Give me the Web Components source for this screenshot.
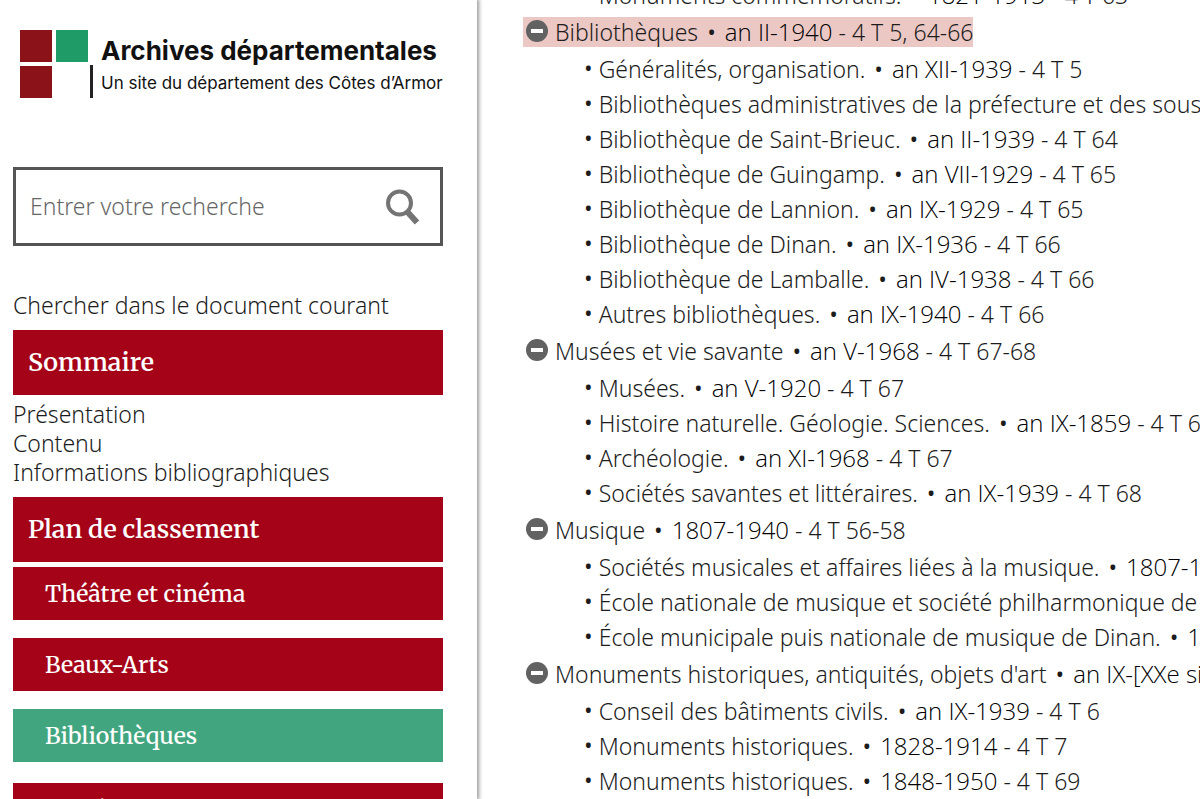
<!DOCTYPE html>
<html lang="fr">
<head>
<meta charset="utf-8">
<meta name="viewport" content="width=device-width, initial-scale=1">
<title>Archives départementales – Côtes d’Armor</title>
<style>
  html, body { height: 100%; margin: 0; }
  body {
    overflow: hidden;
    background: #fff;
    color: #1c1c1c;
    font: 300 23px/29px "Noto Sans", "Open Sans", sans-serif;
  }
</style>
</head>
<body>

<archive-page>
  <archive-sidebar slot="side">
    <site-logo href="#accueil">
      <span slot="title">Archives départementales</span>
      <span slot="subtitle">Un site du département des Côtes d’Armor</span>
    </site-logo>
    <search-box placeholder="Entrer votre recherche"></search-box>
    <side-links>
      <side-link href="#chercher">Chercher dans le document courant</side-link>
    </side-links>
    <side-heading>Sommaire</side-heading>
    <side-links>
      <side-link href="#presentation">Présentation</side-link>
      <side-link href="#contenu">Contenu</side-link>
      <side-link href="#informations">Informations bibliographiques</side-link>
    </side-links>
    <side-heading>Plan de classement</side-heading>
    <plan-list>
      <plan-item href="#theatre">Théâtre et cinéma</plan-item>
      <plan-item href="#beaux-arts">Beaux-Arts</plan-item>
      <plan-item href="#bibliotheques" current>Bibliothèques</plan-item>
      <plan-item href="#musees">Musées et vie savante</plan-item>
    </plan-list>
  </archive-sidebar>

  <tree-view>
    <tree-leaf date="1821-1913" cote="4 T 63">Monuments commémoratifs.</tree-leaf>

    <tree-branch date="an II-1940" cote="4 T 5, 64-66" current>Bibliothèques</tree-branch>
    <tree-leaf date="an XII-1939" cote="4 T 5">Généralités, organisation.</tree-leaf>
    <tree-leaf date="an VIII-1940" cote="4 T 64">Bibliothèques administratives de la préfecture et des sous-préfectures.</tree-leaf>
    <tree-leaf date="an II-1939" cote="4 T 64">Bibliothèque de Saint-Brieuc.</tree-leaf>
    <tree-leaf date="an VII-1929" cote="4 T 65">Bibliothèque de Guingamp.</tree-leaf>
    <tree-leaf date="an IX-1929" cote="4 T 65">Bibliothèque de Lannion.</tree-leaf>
    <tree-leaf date="an IX-1936" cote="4 T 66">Bibliothèque de Dinan.</tree-leaf>
    <tree-leaf date="an IV-1938" cote="4 T 66">Bibliothèque de Lamballe.</tree-leaf>
    <tree-leaf date="an IX-1940" cote="4 T 66">Autres bibliothèques.</tree-leaf>

    <tree-branch date="an V-1968" cote="4 T 67-68">Musées et vie savante</tree-branch>
    <tree-leaf date="an V-1920" cote="4 T 67">Musées.</tree-leaf>
    <tree-leaf date="an IX-1859" cote="4 T 67">Histoire naturelle. Géologie. Sciences.</tree-leaf>
    <tree-leaf date="an XI-1968" cote="4 T 67">Archéologie.</tree-leaf>
    <tree-leaf date="an IX-1939" cote="4 T 68">Sociétés savantes et littéraires.</tree-leaf>

    <tree-branch date="1807-1940" cote="4 T 56-58">Musique</tree-branch>
    <tree-leaf date="1807-1940" cote="4 T 56">Sociétés musicales et affaires liées à la musique.</tree-leaf>
    <tree-leaf date="1884-1940" cote="4 T 57">École nationale de musique et société philharmonique de Saint-Brieuc.</tree-leaf>
    <tree-leaf date="1900-1940" cote="4 T 58">École municipale puis nationale de musique de Dinan.</tree-leaf>

    <tree-branch date="an IX-[XXe siècle]" cote="4 T 6-55">Monuments historiques, antiquités, objets d'art</tree-branch>
    <tree-leaf date="an IX-1939" cote="4 T 6">Conseil des bâtiments civils.</tree-leaf>
    <tree-leaf date="1828-1914" cote="4 T 7">Monuments historiques.</tree-leaf>
    <tree-leaf date="1848-1950" cote="4 T 69">Monuments historiques.</tree-leaf>
  </tree-view>
</archive-page>

<script>
  class BaseElement extends HTMLElement {
    connectedCallback() {
      if (!this.shadowRoot) {
        this.attachShadow({ mode: 'open' }).innerHTML = this.render();
      }
    }
    attr(name) {
      return (this.getAttribute(name) || '').replace(/&/g, '&amp;').replace(/"/g, '&quot;').replace(/</g, '&lt;');
    }
  }

  customElements.define('archive-page', class extends BaseElement {
    render() {
      return `
        <style>
          :host { display: grid; grid-template-columns: 40% 1fr; height: 100%; }
          aside, main { min-width: 0; overflow: hidden; }
          aside { box-sizing: border-box; margin-right: 3px; background: #fff; box-shadow: 1px 0 4px 1px #999; z-index: 1; }
        </style>
        <aside><slot name="side"></slot></aside>
        <main><slot></slot></main>`;
    }
  });

  customElements.define('archive-sidebar', class extends BaseElement {
    render() {
      return `
        <style>
          :host { display: block; padding: 30px 34px 0 13px; }
        </style>
        <slot></slot>`;
    }
  });

  customElements.define('site-logo', class extends BaseElement {
    render() {
      return `
        <style>
          :host { display: block; margin-bottom: 69px; padding-left: 7px; color: #111; }
          a { display: flex; gap: 8px; color: inherit; text-decoration: none; font-family: Inter, sans-serif; white-space: nowrap; }
          svg { flex: none; display: block; }
          .text { padding-top: 4px; }
          .title { display: block; font-size: 26px; font-weight: 700; line-height: 34px; }
          .subtitle { display: block; font-size: 17px; font-weight: 400; line-height: 30px; }
        </style>
        <a href="${this.attr('href')}">
          <svg width="73" height="68" viewBox="0 0 73 68" aria-hidden="true">
            <rect width="32" height="32" fill="#8a1218"/>
            <rect x="36" width="32" height="32" fill="#1f9b67"/>
            <rect y="36" width="32" height="32" fill="#8a1218"/>
            <rect x="70" y="35" width="3" height="33" fill="#222"/>
          </svg>
          <span class="text">
            <span class="title"><slot name="title"></slot></span>
            <span class="subtitle"><slot name="subtitle"></slot></span>
          </span>
        </a>`;
    }
  });

  customElements.define('search-box', class extends BaseElement {
    render() {
      return `
        <style>
          :host { display: block; margin-bottom: 45px; }
          form { display: flex; align-items: center; height: 73px; border: 3px solid #555; background: #fff; }
          input { flex: 1; min-width: 0; height: 100%; box-sizing: border-box; margin: 0; padding: 0 0 2px 14px; border: 0; outline: 0; background: none; font: inherit; color: #222; }
          input::placeholder { color: #666; opacity: 1; }
          button { display: flex; margin: 0; padding: 0 20px 0 8px; border: 0; background: none; cursor: pointer; }
        </style>
        <form role="search" onsubmit="return false">
          <input type="search" aria-label="Recherche" placeholder="${this.attr('placeholder')}">
          <button type="submit" aria-label="Rechercher">
            <svg width="36" height="38" viewBox="0 0 36 38" fill="none" stroke="#747474" aria-hidden="true">
              <circle cx="15.500" cy="15" r="11.500" stroke-width="4"/>
              <path d="M23.500 24 L33 34.500" stroke-width="6"/>
            </svg>
          </button>
        </form>`;
    }
  });

  customElements.define('side-links', class extends BaseElement {
    render() {
      return `
        <style>
          :host { display: flex; flex-direction: column; padding-bottom: 10px; }
        </style>
        <slot></slot>`;
    }
  });

  customElements.define('side-link', class extends BaseElement {
    render() {
      return `
        <style>
          :host { display: block; line-height: 29px; white-space: nowrap; }
          a { color: inherit; text-decoration: none; }
        </style>
        <a href="${this.attr('href')}"><slot></slot></a>`;
    }
  });

  customElements.define('side-heading', class extends BaseElement {
    render() {
      return `
        <style>
          :host { display: block; margin-bottom: 5px; background: #a50318; color: #fff; }
          h2 { margin: 0; padding: 0 15px; font: 600 25px/65px Merriweather, "Noto Serif", "DejaVu Serif", serif; white-space: nowrap; }
        </style>
        <h2><slot></slot></h2>`;
    }
  });

  customElements.define('plan-list', class extends BaseElement {
    render() {
      return `
        <style>
          :host { display: grid; gap: 18px; }
        </style>
        <slot></slot>`;
    }
  });

  customElements.define('plan-item', class extends BaseElement {
    render() {
      return `
        <style>
          :host { display: block; background: #a50318; color: #fff; }
          :host([current]) { margin-bottom: 3px; background: #41a680; }
          a { display: block; padding: 0 32px; color: inherit; text-decoration: none; font: 500 23px/53px Merriweather, "Noto Serif", "DejaVu Serif", serif; white-space: nowrap; }
        </style>
        <a href="${this.attr('href')}"><slot></slot></a>`;
    }
  });

  customElements.define('tree-view', class extends BaseElement {
    render() {
      return `
        <style>
          :host { display: block; margin-top: -23px; padding-left: 43px; }
        </style>
        <slot></slot>`;
    }
  });

  const entryStyle = `
    a { color: inherit; text-decoration: none; white-space: nowrap; }
    .dot { font-family: "Open Sans", sans-serif; font-weight: 400; }
    a .dot { margin: 0 3px; }
    .date { font-family: "Open Sans", sans-serif; font-size: 24px; color: #000; }`;

  const entryLink = el => `<a href="#"><slot></slot> <span class="dot">•</span> <span class="date">${el.attr('date')}</span> - ${el.attr('cote')}</a>`;

  customElements.define('tree-branch', class extends BaseElement {
    render() {
      return `
        <style>
          :host { display: flex; margin: 2px 0; height: 35px; align-items: center; }
          .row { display: flex; align-items: center; gap: 7px; height: 30px; padding-left: 3px; line-height: 30px; }
          :host([current]) .row { background: #ecc8c5; }
          button { display: flex; margin: 0; padding: 0; border: 0; background: none; cursor: pointer; }
          ${entryStyle}
        </style>
        <div class="row">
          <button type="button" aria-label="Replier">
            <svg width="22" height="24" viewBox="0 0 22 24" aria-hidden="true">
              <circle cx="11" cy="11" r="11" fill="#626262"/>
              <rect x="5" y="9" width="12" height="4" fill="#fff"/>
            </svg>
          </button>
          ${entryLink(this)}
        </div>`;
    }
  });

  customElements.define('tree-leaf', class extends BaseElement {
    render() {
      return `
        <style>
          :host { display: flex; gap: 6px; height: 35px; line-height: 35px; padding-left: 61px; white-space: nowrap; }
          ${entryStyle}
        </style>
        <span class="dot">•</span>
        ${entryLink(this)}`;
    }
  });
</script>
</body>
</html>
